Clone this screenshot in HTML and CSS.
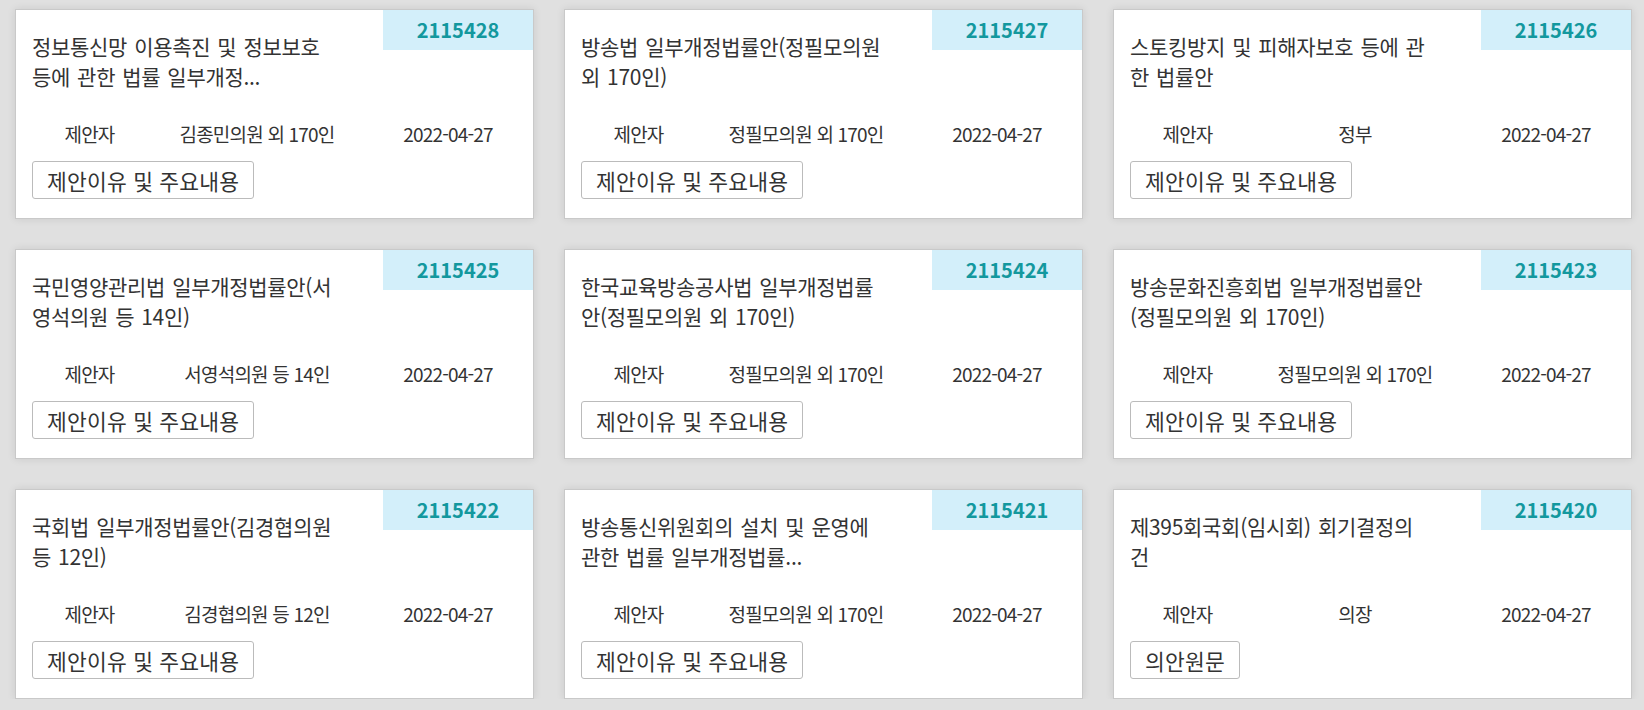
FILE: index.html
```html
<!DOCTYPE html>
<html lang="ko">
<head>
    <meta charset="UTF-8">
    <meta name="viewport" content="width=device-width, initial-scale=1.0">
    <title>의안 목록</title>
    <link rel="stylesheet" href="styles.css">
</head>
<body>

<div class="bill-list">

    <div class="bill-card">
        <span class="bill-no">2115428</span>
        <h3 class="bill-title">정보통신망 이용촉진 및 정보보호 등에 관한 법률 일부개정...</h3>
        <div class="bill-meta">
            <span>제안자</span>
            <span>김종민의원 외 170인</span>
            <span>2022-04-27</span>
        </div>
        <button class="bill-btn">제안이유 및 주요내용</button>
    </div>

    <div class="bill-card">
        <span class="bill-no">2115427</span>
        <h3 class="bill-title">방송법 일부개정법률안(정필모의원 외 170인)</h3>
        <div class="bill-meta">
            <span>제안자</span>
            <span>정필모의원 외 170인</span>
            <span>2022-04-27</span>
        </div>
        <button class="bill-btn">제안이유 및 주요내용</button>
    </div>

    <div class="bill-card">
        <span class="bill-no">2115426</span>
        <h3 class="bill-title">스토킹방지 및 피해자보호 등에 관한 법률안</h3>
        <div class="bill-meta">
            <span>제안자</span>
            <span>정부</span>
            <span>2022-04-27</span>
        </div>
        <button class="bill-btn">제안이유 및 주요내용</button>
    </div>

    <div class="bill-card">
        <span class="bill-no">2115425</span>
        <h3 class="bill-title">국민영양관리법 일부개정법률안(서영석의원 등 14인)</h3>
        <div class="bill-meta">
            <span>제안자</span>
            <span>서영석의원 등 14인</span>
            <span>2022-04-27</span>
        </div>
        <button class="bill-btn">제안이유 및 주요내용</button>
    </div>

    <div class="bill-card">
        <span class="bill-no">2115424</span>
        <h3 class="bill-title">한국교육방송공사법 일부개정법률안(정필모의원 외 170인)</h3>
        <div class="bill-meta">
            <span>제안자</span>
            <span>정필모의원 외 170인</span>
            <span>2022-04-27</span>
        </div>
        <button class="bill-btn">제안이유 및 주요내용</button>
    </div>

    <div class="bill-card">
        <span class="bill-no">2115423</span>
        <h3 class="bill-title">방송문화진흥회법 일부개정법률안(정필모의원 외 170인)</h3>
        <div class="bill-meta">
            <span>제안자</span>
            <span>정필모의원 외 170인</span>
            <span>2022-04-27</span>
        </div>
        <button class="bill-btn">제안이유 및 주요내용</button>
    </div>

    <div class="bill-card">
        <span class="bill-no">2115422</span>
        <h3 class="bill-title">국회법 일부개정법률안(김경협의원 등 12인)</h3>
        <div class="bill-meta">
            <span>제안자</span>
            <span>김경협의원 등 12인</span>
            <span>2022-04-27</span>
        </div>
        <button class="bill-btn">제안이유 및 주요내용</button>
    </div>

    <div class="bill-card">
        <span class="bill-no">2115421</span>
        <h3 class="bill-title">방송통신위원회의 설치 및 운영에 관한 법률 일부개정법률...</h3>
        <div class="bill-meta">
            <span>제안자</span>
            <span>정필모의원 외 170인</span>
            <span>2022-04-27</span>
        </div>
        <button class="bill-btn">제안이유 및 주요내용</button>
    </div>

    <div class="bill-card">
        <span class="bill-no">2115420</span>
        <h3 class="bill-title">제395회국회(임시회) 회기결정의 건</h3>
        <div class="bill-meta">
            <span>제안자</span>
            <span>의장</span>
            <span>2022-04-27</span>
        </div>
        <button class="bill-btn">의안원문</button>
    </div>

</div>

</body>
</html>
```

FILE: styles.css
```css
body {
    margin: 0;
    background-color: #e0e0e0;
    font-family: "Noto Sans CJK KR", sans-serif;
    color: #333;
}

.bill-list {
    display: grid;
    grid-template-columns: repeat(3, 519px);
    gap: 30px;
    padding: 9px 0 0 15px;
}

.bill-card {
    position: relative;
    background-color: white;
    border: 1px solid #c9c9c9;
    box-shadow: 0 0 8px rgba(0, 0, 0, 0.1);
    padding: 21px 4px 19px 16px;
}

.bill-no {
    position: absolute;
    top: 0;
    right: 0;
    width: 150px;
    height: 40px;
    line-height: 40px;
    text-align: center;
    background-color: #d3effa;
    color: #13989e;
    font-size: 20px;
    font-weight: bold;
}

.bill-title {
    width: 301px;
    height: 60px;
    margin: 0 0 31px;
    overflow: hidden;
    font-size: 21px;
    font-weight: normal;
    line-height: 30px;
    letter-spacing: -0.3px;
    word-spacing: 1.5px;
}

.bill-meta {
    display: grid;
    grid-template-columns: 115px 220px 1fr;
    margin-bottom: 15px;
    text-align: center;
    font-size: 19px;
    line-height: 24px;
    letter-spacing: -0.8px;
}

.bill-btn {
    display: block;
    height: 38px;
    padding: 0 14px;
    border: 1px solid #bbb;
    border-radius: 3px;
    background-color: white;
    color: #333;
    font-family: "Noto Sans CJK KR", sans-serif;
    font-size: 21.5px;
    letter-spacing: 0.2px;
    cursor: pointer;
}
```
